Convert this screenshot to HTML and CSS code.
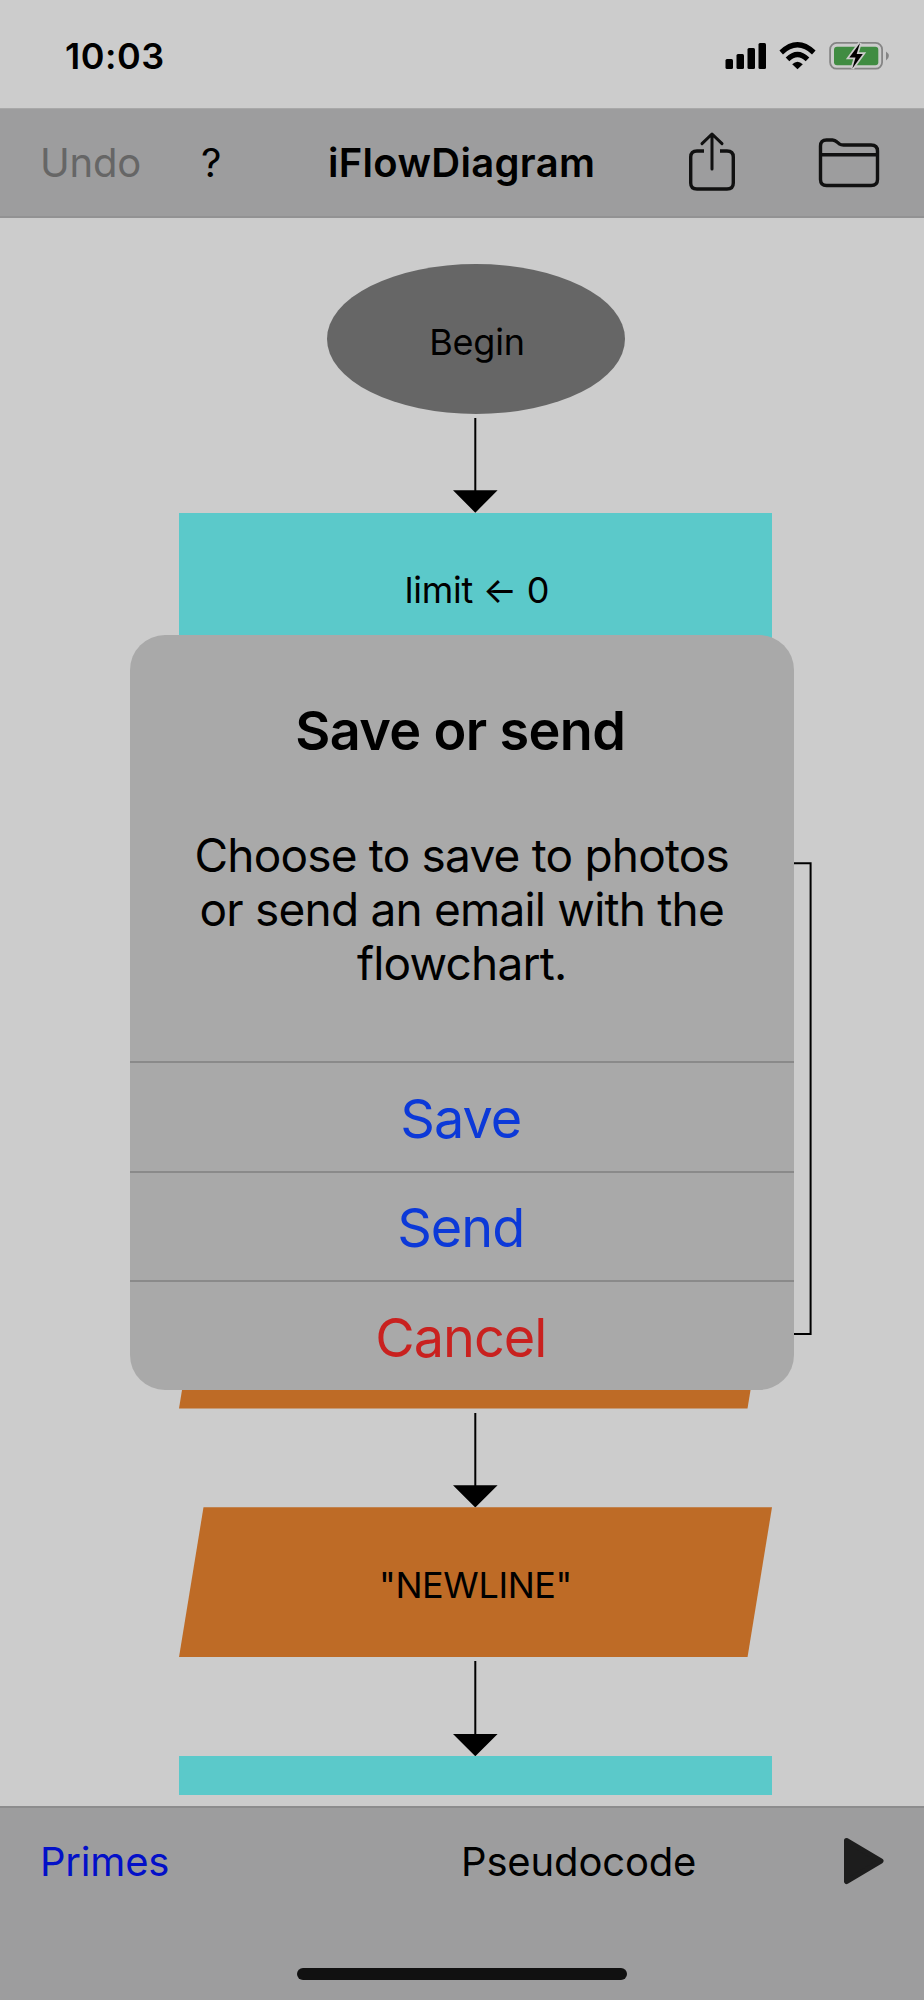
FILE: index.html
```html
<!DOCTYPE html>
<html lang="en">
<head>
<meta charset="utf-8">
<title>iFlowDiagram</title>
<link rel="stylesheet" href="styles.css">
</head>
<body>
<div class="phone">
  <header class="status">
    <span class="time">10:03</span>
    <svg class="status-icons" width="168" height="32" viewBox="0 0 168 32">
      <rect x="1.500" y="19" width="7.500" height="10" rx="1.500"/>
      <rect x="12.500" y="14" width="7.500" height="15" rx="1.500"/>
      <rect x="23.500" y="8" width="7.500" height="21" rx="1.500"/>
      <rect x="34.500" y="3" width="7.500" height="26" rx="1.500"/>
      <path class="wave" d="M57.200 12.500Q73.500-2.800 89.800 12.500M63.500 19.300Q73.500 9.700 83.500 19.300"/>
      <path d="M68.200 24.300Q73.500 19 78.800 24.300L73.500 29.300Z"/>
      <rect class="shell" x="106.100" y="2.900" width="52" height="25.800" rx="6.500"/>
      <path class="tip" d="M162 11.500Q164.900 13.500 164.900 16T162 20.500Z"/>
      <rect class="charge" x="110" y="6.700" width="44.300" height="18.600" rx="3"/>
      <path class="bolt" d="M136 3L125.300 17.500H131.500L128.300 28.500L138.800 14H132.700Z"/>
    </svg>
  </header>
  <nav class="navbar">
    <span class="undo">Undo</span>
    <span class="help">?</span>
    <span class="app-title">iFlowDiagram</span>
    <svg class="share" width="52" height="64" viewBox="0 0 52 64">
      <path d="M18 20H11Q4.700 20 4.700 26V52Q4.700 58 11 58H41Q47.300 58 47.300 52V26Q47.300 20 41 20H34"/>
      <path class="arrow" d="M26 38V3M16 12.700L26 3L36 12.700"/>
    </svg>
    <svg class="folder" width="64" height="52" viewBox="0 0 64 52">
      <path d="M3.500 41.500V8Q3.500 2 9.500 2H15.500Q18 2 20 4L22.200 5.800Q24 7 26.500 7H54Q60.500 7 60.500 13V41.500Q60.500 47.500 54 47.500H9.500Q3.500 47.500 3.500 41.500ZM3.500 16.800H60.500"/>
    </svg>
  </nav>
  <main class="canvas">
    <svg class="links" width="924" height="1588" viewBox="0 218 924 1588">
      <g class="stems"><path d="M475.300 418V492M475.300 1413V1487M475.300 1661V1736M780 863.200H810.600V1334H780"/></g>
      <g class="heads"><path d="M453 490.300H497.600L475.300 512.700ZM453 1485.300H497.600L475.300 1507.500ZM453 1734H497.600L475.300 1756.200Z"/></g>
    </svg>
    <div class="node begin"><span>Begin</span></div>
    <div class="node assign"><span>limit ← 0</span></div>
    <div class="node output first"></div>
    <div class="node output second"><span>"NEWLINE"</span></div>
    <div class="node assign-next"></div>
  </main>
  <footer class="toolbar">
    <div class="tools">
      <span class="primes">Primes</span>
      <span class="pseudo">Pseudocode</span>
      <svg class="play" width="44" height="50" viewBox="0 0 44 50"><path d="M5.500 4.500L40 25L5.500 45.500Z"/></svg>
    </div>
    <div class="home"></div>
  </footer>
  <section class="alert">
    <div class="alert-body">
      <h1>Save or send</h1>
      <p>Choose to save to photos<br>or send an email with the<br>flowchart.</p>
    </div>
    <div class="action">Save</div>
    <div class="action">Send</div>
    <div class="action cancel">Cancel</div>
  </section>
</div>
</body>
</html>
```
FILE: styles.css
```css
* { box-sizing: border-box; }
body { margin: 0; background: #ccc; font-family: Inter, "Liberation Sans", sans-serif; color: #000; }
.phone { position: relative; width: 924px; height: 2000px; display: flex; flex-direction: column; overflow: hidden; white-space: nowrap; }
.status { height: 108px; display: flex; justify-content: space-between; padding: 40px 34px 0 65px; }
.time { font-size: 36px; line-height: 32px; font-weight: 600; letter-spacing: 0.500px; }
.status-icons { margin-right: -2px; }
.wave { fill: none; stroke: #000; stroke-width: 5.200; }
.shell { fill: none; stroke: #858585; stroke-width: 1.800; }
.tip { fill: #858585; }
.charge { fill: #408c42; }
.bolt { stroke: #ccc; stroke-width: 3.500; paint-order: stroke; }
.navbar { height: 110px; display: flex; align-items: flex-start; background: #9d9d9e; border-bottom: 2px solid #929293; padding: 22px 0 0 40px; font-size: 40px; line-height: 64px; border-top: 1px solid #a8a8a8; }
.undo { width: 161px; color: #666; letter-spacing: -0.200px; }
.help { width: 127px; }
.app-title { width: 358px; font-weight: 600; letter-spacing: 0.300px; }
.share { width: 52px; margin-right: 79px; }
.share path, .folder path { fill: none; stroke: #111; stroke-width: 3.400; stroke-linejoin: round; }
.share .arrow { stroke-width: 3; stroke-linecap: round; }
.folder { margin-top: 7px; }
.canvas { position: relative; height: 1588px; }
.links { position: absolute; left: 0; top: 0; }
.stems path { fill: none; stroke: #000; stroke-width: 2; }
.node { position: absolute; left: 179px; width: 593px; display: flex; align-items: center; justify-content: center; font-size: 36px; letter-spacing: -0.250px; }
.begin { left: 326.500px; top: 45.500px; width: 298px; height: 150px; border-radius: 50%; background: #666; padding: 7px 0 0 3px; }
.assign { top: 294.500px; height: 150px; background: #5bc9ca; padding: 5px 0 0 3px; }
.output { height: 150px; background: #be6b26; clip-path: polygon(24.500px 0, 100% 0, 568.500px 100%, 0 100%); padding-top: 6px; letter-spacing: -0.400px; }
.first { top: 1040.500px; }
.second { top: 1289.300px; }
.assign-next { top: 1538.200px; height: 39.300px; background: #5bc9ca; }
.toolbar { height: 194px; background: #9d9d9e; border-top: 2px solid #8c8c8d; display: flex; flex-direction: column; align-items: center; }
.tools { width: 924px; height: 160px; padding: 28px 0 0 40px; display: flex; font-size: 40px; line-height: 52px; }
.primes { width: 421px; color: #0310c8; letter-spacing: -0.200px; }
.pseudo { width: 380px; letter-spacing: -0.150px; }
.play path { fill: #1d1d1d; stroke: #1d1d1d; stroke-width: 5; stroke-linejoin: round; }
.home { width: 330px; height: 12px; border-radius: 6px; background: #111; }
.alert { position: absolute; left: 129.500px; top: 634.500px; width: 664.500px; height: 755.500px; border-radius: 35px; background: #a9a9a9; text-align: center; display: flex; flex-direction: column; }
.alert-body { height: 426.500px; padding-top: 64px; }
.alert h1 { margin: 0; padding-right: 3px; font-size: 54px; line-height: 64px; font-weight: 600; letter-spacing: -0.650px; }
.alert p { margin: 65px 0 0; font-size: 46px; line-height: 54.300px; letter-spacing: -0.800px; }
.action { height: 109.600px; border-top: 2px solid #8a8a8a; display: flex; justify-content: center; align-items: center; font-size: 54px; padding: 3px 2px 0 0; color: #0c39d8; letter-spacing: -1px; }
.cancel { color: #c9211f; }
```
